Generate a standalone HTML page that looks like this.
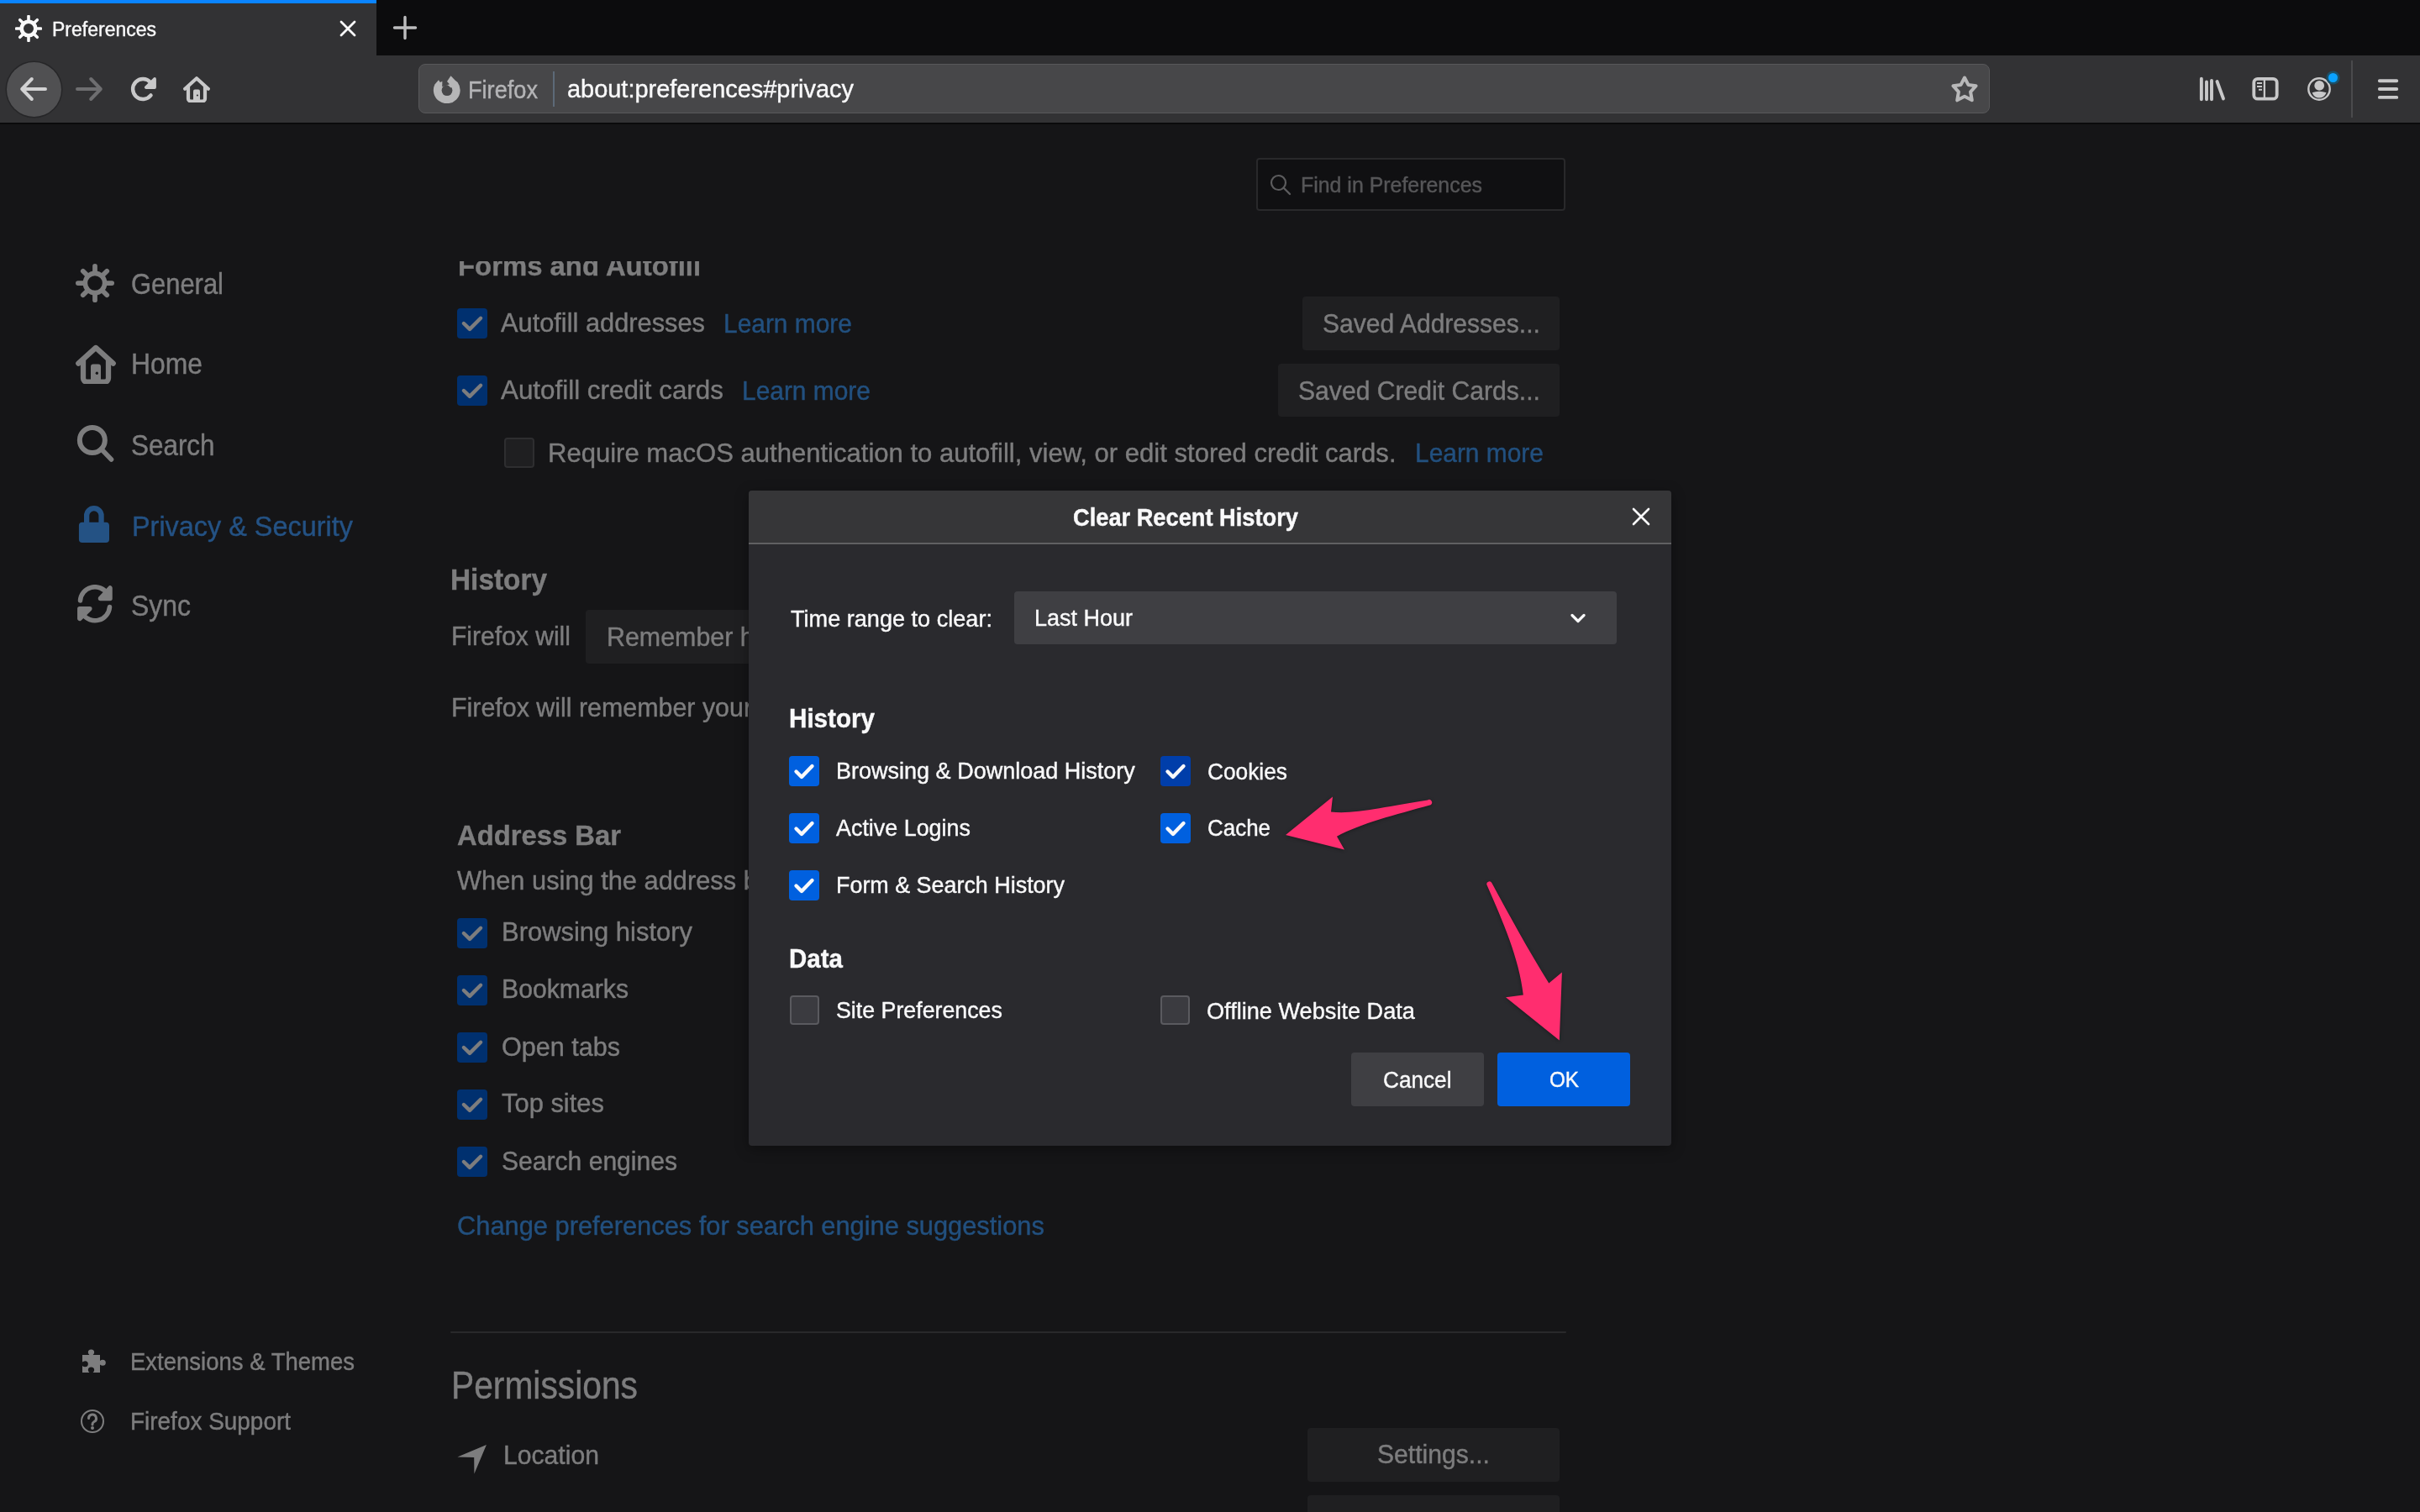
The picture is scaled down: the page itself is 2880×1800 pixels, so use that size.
<!DOCTYPE html>
<html><head><meta charset="utf-8"><style>
html,body{margin:0;padding:0;width:2880px;height:1800px;overflow:hidden;background:#151517}
body{position:relative;font-family:"Liberation Sans",sans-serif}
.b{position:absolute;display:block;box-sizing:content-box}
.t{position:absolute;white-space:nowrap;line-height:1;-webkit-text-stroke:0.4px currentColor;will-change:transform}
</style></head><body>
<div class="b" style="left:0px;top:0px;width:2880px;height:66px;background:#0c0c0d;"></div>
<div class="b" style="left:0px;top:0px;width:448px;height:66px;background:#323234;"></div>
<div class="b" style="left:0px;top:0px;width:448px;height:4px;background:#0a84ff;"></div>
<svg class="b" style="left:18.0px;top:18.0px;" width="32" height="32" viewBox="0 0 32 32"><g stroke="#f9f9fa" fill="none" stroke-linecap="round"><circle cx="16" cy="16" r="8.3" stroke-width="4.6"/><g stroke-width="3.6"><line x1="26.50" y1="16.00" x2="30.60" y2="16.00"/><line x1="23.42" y1="23.42" x2="26.32" y2="26.32"/><line x1="16.00" y1="26.50" x2="16.00" y2="30.60"/><line x1="8.58" y1="23.42" x2="5.68" y2="26.32"/><line x1="5.50" y1="16.00" x2="1.40" y2="16.00"/><line x1="8.58" y1="8.58" x2="5.68" y2="5.68"/><line x1="16.00" y1="5.50" x2="16.00" y2="1.40"/><line x1="23.42" y1="8.58" x2="26.32" y2="5.68"/></g></g></svg>
<div class="t" style="left:62.0px;top:23.5px;font-size:23.00px;color:#f9f9fa;">Preferences</div>
<svg class="b" style="left:402px;top:22px;" width="24" height="24" viewBox="0 0 24 24"><path d="M4 4L20 20M20 4L4 20" stroke="#f9f9fa" stroke-width="2.8" stroke-linecap="round"/></svg>
<svg class="b" style="left:466px;top:17px;" width="32" height="32" viewBox="0 0 32 32"><path d="M16 3.5V28.5M3.5 16H28.5" stroke="#bdbdbe" stroke-width="3.4" stroke-linecap="round"/></svg>
<div class="b" style="left:0px;top:66px;width:2880px;height:80px;background:#323234;"></div>
<div class="b" style="left:0px;top:146px;width:2880px;height:2px;background:#0a0a0b;"></div>
<div class="b" style="left:7.5px;top:73.5px;width:65px;height:65px;border-radius:50%;background:#505052;box-shadow:0 0 0 1.5px #262628"></div>
<svg class="b" style="left:22px;top:90px;" width="36" height="32" viewBox="0 0 36 32"><path d="M4.2 16H32M4.2 16L15.8 4M4.2 16L15.8 28" stroke="#d2d2d3" stroke-width="4" stroke-linecap="round" stroke-linejoin="round" fill="none"/></svg>
<svg class="b" style="left:88px;top:90px;" width="36" height="32" viewBox="0 0 36 32"><path d="M31.8 16H4M31.8 16L20.2 4M31.8 16L20.2 28" stroke="#6e6e70" stroke-width="4" stroke-linecap="round" stroke-linejoin="round" fill="none"/></svg>
<svg class="b" style="left:154px;top:90px;" width="34" height="32" viewBox="0 0 34 32"><path d="M25.56 23.39A12 12 0 1 1 25 7.97" stroke="#c8c8c9" stroke-width="4.4" fill="none" stroke-linecap="round"/><path d="M19.8 14H30V4Z" fill="#c8c8c9" stroke="#c8c8c9" stroke-width="3.8" stroke-linejoin="round" stroke-linecap="round"/></svg>
<svg class="b" style="left:218px;top:90px;" width="32" height="32" viewBox="0 0 32 32"><g fill="none" stroke="#c8c8c9" stroke-width="4.2" stroke-linecap="round" stroke-linejoin="round"><path d="M2.2 15.8L16 3.3L29.8 15.8"/><path d="M6 13V27.5A3 3 0 0 0 9 30.5H23A3 3 0 0 0 26 27.5V13"/></g><path d="M12 18.4A2 2 0 0 1 14 16.4H18A2 2 0 0 1 20 18.4V30.5H12Z" fill="#c8c8c9"/><circle cx="16.9" cy="23.5" r="1.1" fill="#323234"/></svg>
<div class="b" style="left:498px;top:76px;width:1868px;height:57px;border-radius:8px;background:#474749;border:1.5px solid #58585a"></div>
<svg class="b" style="left:515px;top:89px;" width="34" height="34" viewBox="-1 -1 34 34"><path fill="#b6b6b7" d="M1.4 10.5L6 5.3L7.8 7.9L10.4 6.7L13 9.5L16 7.1L20.5 0.2L25.5 5.5L28.6 7.9A15.9 15.9 0 1 1 1.4 10.5Z"/><g fill="#474749"><circle cx="16" cy="17.6" r="6.4"/><path d="M10.4 6.7L16 7.1L19 10.2L15 11.8L10.2 13.2Z"/></g><path fill="#b6b6b7" d="M16.5 10.8L22.8 12.2L20.5 14.5Z"/></svg>
<div class="t" style="left:557.0px;top:93.8px;font-size:27.16px;color:#b4b4b6;transform:scaleY(1.060);transform-origin:0 23.00px;">Firefox</div>
<div class="b" style="left:658px;top:85px;width:2px;height:42px;background:#5d6a78;"></div>
<div class="t" style="left:675.0px;top:92.0px;font-size:28.94px;color:#f9f9fa;">about:preferences#privacy</div>
<svg class="b" style="left:2320px;top:88px;" width="36" height="36" viewBox="0 0 36 36"><path d="M18 4.5L22.4 12.9L31.6 14.2L25.1 21.4L26.8 31.3L18 26.8L9.2 31.3L10.9 21.4L4.4 14.2L13.6 12.9Z" fill="none" stroke="#b8b8b9" stroke-width="4" stroke-linejoin="round"/></svg>
<svg class="b" style="left:2616px;top:90px;" width="34" height="32" viewBox="0 0 34 32"><g stroke="#c8c8c9" stroke-width="3.9" stroke-linecap="round"><path d="M3.85 3.65V28.25M10 7.55V28.25M16 5.95V28.25M22.5 7L30 27.5"/></g></svg>
<svg class="b" style="left:2678px;top:90px;" width="36" height="32" viewBox="0 0 36 32"><rect x="4.3" y="3.9" width="27.4" height="23.8" rx="4.5" fill="none" stroke="#c8c8c9" stroke-width="3.8"/><path d="M16.85 4V28" stroke="#c8c8c9" stroke-width="2.3"/><path d="M8 9H14M8 12.9H14M10 16.8H14" stroke="#c8c8c9" stroke-width="2"/></svg>
<svg class="b" style="left:2744px;top:88px;" width="34" height="34" viewBox="0 0 34 34"><circle cx="16" cy="18" r="12.7" fill="none" stroke="#c8c8c9" stroke-width="2.4"/><circle cx="16.2" cy="13.9" r="5.9" fill="#c8c8c9"/><path d="M7.6 22.2Q16 19.2 24.6 22.2Q22 28.6 16 28.6Q10 28.6 7.6 22.2Z" fill="#c8c8c9"/></svg>
<div class="b" style="left:2770.5px;top:86.5px;width:11px;height:11px;border-radius:50%;background:#0aa2ff;box-shadow:0 0 0 2.6px #1c5068"></div>
<div class="b" style="left:2798px;top:72px;width:2px;height:68px;background:#4a4a4c;"></div>
<svg class="b" style="left:2826px;top:88px;" width="32" height="36" viewBox="0 0 32 36"><path d="M5.85 8.2H26.25M5.85 18H26.25M5.85 27.9H26.25" stroke="#c8c8c9" stroke-width="3.9" stroke-linecap="round"/></svg>
<div class="b" style="left:0px;top:148px;width:2880px;height:1652px;background:#151517;"></div>
<div class="b" style="left:1495px;top:188px;width:364px;height:59px;background:#101012;border:2px solid #29292b;border-radius:4px"></div>
<svg class="b" style="left:1510px;top:206px;" width="28" height="28" viewBox="0 0 28 28"><circle cx="11.5" cy="11.5" r="8.5" fill="none" stroke="#5c5c5e" stroke-width="2.2"/><path d="M17.5 17.5L25 25" stroke="#5c5c5e" stroke-width="2.4" stroke-linecap="round"/></svg>
<div class="t" style="left:1548.0px;top:207.9px;font-size:24.91px;color:#565658;transform:scaleY(1.050);transform-origin:0 21.10px;">Find in Preferences</div>
<svg class="b" style="left:89.8px;top:313.8px;" width="46" height="46" viewBox="0 0 32 32"><g stroke="#7d7d7e" fill="none" stroke-linecap="round"><circle cx="16" cy="16" r="8.1" stroke-width="3.9"/><g stroke-width="4.0"><line x1="26.00" y1="16.00" x2="30.00" y2="16.00"/><line x1="23.07" y1="23.07" x2="25.90" y2="25.90"/><line x1="16.00" y1="26.00" x2="16.00" y2="30.00"/><line x1="8.93" y1="23.07" x2="6.10" y2="25.90"/><line x1="6.00" y1="16.00" x2="2.00" y2="16.00"/><line x1="8.93" y1="8.93" x2="6.10" y2="6.10"/><line x1="16.00" y1="6.00" x2="16.00" y2="2.00"/><line x1="23.07" y1="8.93" x2="25.90" y2="6.10"/></g></g></svg>
<div class="t" style="left:156.0px;top:324.8px;font-size:30.92px;color:#7d7d7e;transform:scaleY(1.152);transform-origin:0 26.19px;">General</div>
<svg class="b" style="left:90px;top:409px;" width="48" height="48" viewBox="0 0 32 32"><g fill="none" stroke="#7d7d7e" stroke-width="4.2" stroke-linecap="round" stroke-linejoin="round"><path d="M2.2 15.8L16 3.3L29.8 15.8"/><path d="M6 13V27.5A3 3 0 0 0 9 30.5H23A3 3 0 0 0 26 27.5V13"/></g><path d="M12 18.4A2 2 0 0 1 14 16.4H18A2 2 0 0 1 20 18.4V30.5H12Z" fill="#7d7d7e"/><circle cx="16.9" cy="23.5" r="1.1" fill="#151517"/></svg>
<div class="t" style="left:156.0px;top:419.0px;font-size:31.86px;color:#7d7d7e;transform:scaleY(1.072);transform-origin:0 26.98px;">Home</div>
<svg class="b" style="left:90px;top:504px;" width="48" height="50" viewBox="0 0 48 50"><circle cx="19.85" cy="20" r="15" fill="none" stroke="#7d7d7e" stroke-width="6"/><path d="M30.5 30.5L42.5 43" stroke="#7d7d7e" stroke-width="5.6" stroke-linecap="round"/></svg>
<div class="t" style="left:156.0px;top:515.9px;font-size:31.41px;color:#7d7d7e;transform:scaleY(1.111);transform-origin:0 26.60px;">Search</div>
<svg class="b" style="left:93px;top:601px;" width="38" height="46" viewBox="0 0 38 46"><path d="M10.15 21V12.85A8.7 8.7 0 0 1 27.55 12.85V21" fill="none" stroke="#245284" stroke-width="6.3"/><rect x="0.9" y="20.8" width="36.1" height="24.2" rx="4" fill="#245284"/></svg>
<div class="t" style="left:157.0px;top:610.5px;font-size:32.42px;color:#245284;transform:scaleY(1.031);transform-origin:0 27.46px;">Privacy &amp; Security</div>
<svg class="b" style="left:90px;top:696px;" width="46" height="46" viewBox="0 0 46 46"><g fill="none" stroke="#7d7d7e" stroke-width="5.5" stroke-linecap="round" stroke-linejoin="round"><path d="M5.5 19A17.5 17.5 0 0 1 37.5 10.5"/><path d="M40.5 26.5A17.5 17.5 0 0 1 8.5 35"/><path d="M41 4V16.4H29.5Z" fill="#7d7d7e"/><path d="M4.8 40.4V28.8H16.8Z" fill="#7d7d7e"/></g></svg>
<div class="t" style="left:156.0px;top:706.9px;font-size:31.94px;color:#7d7d7e;transform:scaleY(1.092);transform-origin:0 27.05px;">Sync</div>
<svg class="b" style="left:96px;top:1604px;" width="32" height="32" viewBox="0 0 32 32"><path transform="translate(2 0) scale(1.05 1) translate(-2 0)" fill="#7d7d7e" d="M2 9H10C9 8 8.5 7 8.5 6A3.5 3.5 0 0 1 15.5 6C15.5 7 15 8 14 9H22V16C23 15.2 24 14.8 25 14.8A3.5 3.5 0 0 1 25 21.8C24 21.8 23 21.3 22 20.5V30H14C15 29 15.5 28 15.5 27A3.5 3.5 0 0 0 8.5 27C8.5 28 9 29 10 30H2V22C3 22.8 4 23.2 5 23.2A3.5 3.5 0 0 0 5 16.2C4 16.2 3 16.8 2 17.5Z"/></svg>
<div class="t" style="left:154.5px;top:1607.7px;font-size:27.50px;color:#7d7d7e;transform:scaleY(1.057);transform-origin:0 23.29px;">Extensions &amp; Themes</div>
<svg class="b" style="left:94px;top:1676px;" width="32" height="32" viewBox="0 0 32 32"><circle cx="16" cy="16" r="13" fill="none" stroke="#7d7d7e" stroke-width="2"/><path d="M11.5 12.5A4.5 4.5 0 1 1 18 16.5C16.8 17.2 16 18 16 19.5V20" fill="none" stroke="#7d7d7e" stroke-width="3" stroke-linecap="round"/><circle cx="16" cy="24" r="2" fill="#7d7d7e"/></svg>
<div class="t" style="left:154.5px;top:1679.3px;font-size:27.94px;color:#7d7d7e;transform:scaleY(1.056);transform-origin:0 23.67px;">Firefox Support</div>
<div class="clip" style="position:absolute;left:0;top:311px;width:2880px;height:1489px;overflow:hidden">
<div class="t" style="left:545.0px;top:-9.8px;font-size:32.86px;color:#7d7d7e;font-weight:bold;">Forms and Autofill</div>
<div class="b" style="left:544px;top:56px;width:36px;height:36px;border-radius:4px;background:#00306f"></div>
<svg class="b" style="left:544px;top:56px;" width="36" height="36" viewBox="0 0 36 36"><path d="M7.9 18L15 24.9L28.1 11.8" fill="none" stroke="#7d7d7e" stroke-width="4.4" stroke-linecap="round" stroke-linejoin="round"/></svg>
<div class="t" style="left:596.0px;top:58.9px;font-size:30.79px;color:#7d7d7e;transform:scaleY(1.039);transform-origin:0 26.08px;">Autofill addresses</div>
<div class="t" style="left:861.0px;top:59.7px;font-size:29.92px;color:#22507f;transform:scaleY(1.069);transform-origin:0 25.34px;">Learn more</div>
<div class="b" style="left:544px;top:136px;width:36px;height:36px;border-radius:4px;background:#00306f"></div>
<svg class="b" style="left:544px;top:136px;" width="36" height="36" viewBox="0 0 36 36"><path d="M7.9 18L15 24.9L28.1 11.8" fill="none" stroke="#7d7d7e" stroke-width="4.4" stroke-linecap="round" stroke-linejoin="round"/></svg>
<div class="t" style="left:596.0px;top:138.4px;font-size:31.37px;color:#7d7d7e;">Autofill credit cards</div>
<div class="t" style="left:883.0px;top:139.7px;font-size:29.92px;color:#22507f;transform:scaleY(1.069);transform-origin:0 25.34px;">Learn more</div>
<div class="b" style="left:600px;top:210px;width:32px;height:32px;border-radius:4px;background:#1f1f21;border:2px solid #2e2e30"></div>
<div class="t" style="left:652.0px;top:212.7px;font-size:31.06px;color:#7d7d7e;transform:scaleY(1.029);transform-origin:0 26.31px;">Require macOS authentication to autofill, view, or edit stored credit cards.</div>
<div class="t" style="left:1684.0px;top:213.7px;font-size:29.92px;color:#22507f;transform:scaleY(1.069);transform-origin:0 25.34px;">Learn more</div>
<div class="b" style="left:1550px;top:42px;width:306px;height:64px;border-radius:4px;background:#1f1f21"></div>
<div class="t" style="left:1574.0px;top:59.5px;font-size:30.06px;color:#7d7d7e;transform:scaleY(1.064);transform-origin:0 25.46px;">Saved Addresses...</div>
<div class="b" style="left:1521px;top:122px;width:335px;height:63px;border-radius:4px;background:#1f1f21"></div>
<div class="t" style="left:1545.0px;top:139.5px;font-size:30.13px;color:#7d7d7e;transform:scaleY(1.061);transform-origin:0 25.52px;">Saved Credit Cards...</div>
<div class="t" style="left:536.4px;top:363.2px;font-size:33.38px;color:#7d7d7e;font-weight:bold;transform:scaleY(1.054);transform-origin:0 28.27px;">History</div>
<div class="t" style="left:536.5px;top:432.1px;font-size:30.07px;color:#7d7d7e;transform:scaleY(1.039);transform-origin:0 25.47px;">Firefox will</div>
<div class="b" style="left:697px;top:415px;width:503px;height:64px;border-radius:4px;background:#1f1f21"></div>
<div class="t" style="left:721.5px;top:431.9px;font-size:30.40px;color:#7d7d7e;transform:scaleY(1.028);transform-origin:0 25.75px;">Remember history</div>
<div class="t" style="left:536.5px;top:516.3px;font-size:30.40px;color:#7d7d7e;transform:scaleY(1.028);transform-origin:0 25.75px;">Firefox will remember your browsing, download, form, and search history.</div>
<div class="t" style="left:544.0px;top:668.2px;font-size:32.79px;color:#7d7d7e;font-weight:bold;">Address Bar</div>
<div class="t" style="left:544.0px;top:723.3px;font-size:30.80px;color:#7d7d7e;transform:scaleY(1.038);transform-origin:0 26.09px;">When using the address bar, suggest</div>
<div class="b" style="left:544px;top:782px;width:36px;height:36px;border-radius:4px;background:#00306f"></div>
<svg class="b" style="left:544px;top:782px;" width="36" height="36" viewBox="0 0 36 36"><path d="M7.9 18L15 24.9L28.1 11.8" fill="none" stroke="#7d7d7e" stroke-width="4.4" stroke-linecap="round" stroke-linejoin="round"/></svg>
<div class="t" style="left:596.5px;top:783.8px;font-size:30.94px;color:#7d7d7e;transform:scaleY(1.033);transform-origin:0 26.21px;">Browsing history</div>
<div class="b" style="left:544px;top:850px;width:36px;height:36px;border-radius:4px;background:#00306f"></div>
<svg class="b" style="left:544px;top:850px;" width="36" height="36" viewBox="0 0 36 36"><path d="M7.9 18L15 24.9L28.1 11.8" fill="none" stroke="#7d7d7e" stroke-width="4.4" stroke-linecap="round" stroke-linejoin="round"/></svg>
<div class="t" style="left:596.5px;top:852.4px;font-size:30.19px;color:#7d7d7e;transform:scaleY(1.059);transform-origin:0 25.57px;">Bookmarks</div>
<div class="b" style="left:544px;top:918px;width:36px;height:36px;border-radius:4px;background:#00306f"></div>
<svg class="b" style="left:544px;top:918px;" width="36" height="36" viewBox="0 0 36 36"><path d="M7.9 18L15 24.9L28.1 11.8" fill="none" stroke="#7d7d7e" stroke-width="4.4" stroke-linecap="round" stroke-linejoin="round"/></svg>
<div class="t" style="left:596.5px;top:920.1px;font-size:30.56px;color:#7d7d7e;transform:scaleY(1.046);transform-origin:0 25.88px;">Open tabs</div>
<div class="b" style="left:544px;top:986px;width:36px;height:36px;border-radius:4px;background:#00306f"></div>
<svg class="b" style="left:544px;top:986px;" width="36" height="36" viewBox="0 0 36 36"><path d="M7.9 18L15 24.9L28.1 11.8" fill="none" stroke="#7d7d7e" stroke-width="4.4" stroke-linecap="round" stroke-linejoin="round"/></svg>
<div class="t" style="left:596.5px;top:987.8px;font-size:30.92px;color:#7d7d7e;transform:scaleY(1.034);transform-origin:0 26.19px;">Top sites</div>
<div class="b" style="left:544px;top:1054px;width:36px;height:36px;border-radius:4px;background:#00306f"></div>
<svg class="b" style="left:544px;top:1054px;" width="36" height="36" viewBox="0 0 36 36"><path d="M7.9 18L15 24.9L28.1 11.8" fill="none" stroke="#7d7d7e" stroke-width="4.4" stroke-linecap="round" stroke-linejoin="round"/></svg>
<div class="t" style="left:596.5px;top:1056.5px;font-size:30.08px;color:#7d7d7e;transform:scaleY(1.063);transform-origin:0 25.47px;">Search engines</div>
<div class="t" style="left:544.0px;top:1133.5px;font-size:30.82px;color:#22507f;transform:scaleY(1.038);transform-origin:0 26.10px;">Change preferences for search engine suggestions</div>
<div class="b" style="left:536px;top:1274px;width:1328px;height:2px;border-radius:4px;background:#29292b"></div>
<div class="t" style="left:536.7px;top:1319.5px;font-size:40.76px;color:#7d7d7e;transform:scaleY(1.141);transform-origin:0 34.53px;">Permissions</div>
<svg class="b" style="left:544px;top:1408px;" width="36" height="37" viewBox="0 0 36 37"><path d="M34.9 1L0.4 15.6L20.2 16.1L20.4 35.6Z" fill="#7d7d7e"/></svg>
<div class="t" style="left:599.0px;top:1406.8px;font-size:30.15px;color:#7d7d7e;transform:scaleY(1.061);transform-origin:0 25.54px;">Location</div>
<div class="b" style="left:1556px;top:1389px;width:300px;height:64px;border-radius:4px;background:#1f1f21"></div>
<div class="t" style="left:1639.0px;top:1406.1px;font-size:30.13px;color:#7d7d7e;transform:scaleY(1.061);transform-origin:0 25.52px;">Settings...</div>
<div class="b" style="left:1556px;top:1469px;width:300px;height:64px;border-radius:4px;background:#1f1f21"></div>
</div>
<div class="b" style="left:891px;top:584px;width:1098px;height:780px;background:#2a2a2e;border-radius:4px;overflow:hidden;box-shadow:0 4px 16px rgba(0,0,0,0.35)">
<div class="b" style="left:0;top:0;width:1098px;height:62px;background:#363638"></div>
<div class="b" style="left:0;top:62px;width:1098px;height:2px;background:#606062"></div>
</div>
<div class="t" style="left:1276.7px;top:602.9px;font-size:27.24px;color:#f9f9fa;font-weight:bold;transform:scaleY(1.067);transform-origin:0 23.08px;">Clear Recent History</div>
<svg class="b" style="left:1941px;top:604px;" width="24" height="22" viewBox="0 0 24 22"><path d="M3 2L21 20M21 2L3 20" stroke="#f9f9fa" stroke-width="2.6" stroke-linecap="round"/></svg>
<div class="t" style="left:941.3px;top:723.0px;font-size:27.10px;color:#f9f9fa;">Time range to clear:</div>
<div class="b" style="left:1207px;top:704px;width:717px;height:63px;border-radius:4px;background:#3f3f43"></div>
<div class="t" style="left:1230.7px;top:723.1px;font-size:26.99px;color:#f9f9fa;transform:scaleY(1.023);transform-origin:0 22.86px;">Last Hour</div>
<svg class="b" style="left:1868px;top:729px;" width="20" height="15" viewBox="0 0 20 15"><path d="M3 3.5L10 10.5L17 3.5" fill="none" stroke="#f9f9fa" stroke-width="3.2" stroke-linecap="round" stroke-linejoin="round"/></svg>
<div class="t" style="left:939.4px;top:841.2px;font-size:29.61px;color:#f9f9fa;font-weight:bold;transform:scaleY(1.031);transform-origin:0 25.08px;">History</div>
<div class="b" style="left:939px;top:900px;width:36px;height:36px;border-radius:4px;background:#0060df"></div>
<svg class="b" style="left:939px;top:900px;" width="36" height="36" viewBox="0 0 36 36"><path d="M8.5 18.5L15 25L27.5 12" fill="none" stroke="#f9f9fa" stroke-width="4.4" stroke-linecap="round" stroke-linejoin="round"/></svg>
<div class="t" style="left:995.4px;top:905.1px;font-size:27.03px;color:#f9f9fa;transform:scaleY(1.022);transform-origin:0 22.89px;">Browsing &amp; Download History</div>
<div class="b" style="left:939px;top:968px;width:36px;height:36px;border-radius:4px;background:#0060df"></div>
<svg class="b" style="left:939px;top:968px;" width="36" height="36" viewBox="0 0 36 36"><path d="M8.5 18.5L15 25L27.5 12" fill="none" stroke="#f9f9fa" stroke-width="4.4" stroke-linecap="round" stroke-linejoin="round"/></svg>
<div class="t" style="left:995.4px;top:972.9px;font-size:26.90px;color:#f9f9fa;transform:scaleY(1.027);transform-origin:0 22.78px;">Active Logins</div>
<div class="b" style="left:939px;top:1036px;width:36px;height:36px;border-radius:4px;background:#0060df"></div>
<svg class="b" style="left:939px;top:1036px;" width="36" height="36" viewBox="0 0 36 36"><path d="M8.5 18.5L15 25L27.5 12" fill="none" stroke="#f9f9fa" stroke-width="4.4" stroke-linecap="round" stroke-linejoin="round"/></svg>
<div class="t" style="left:995.4px;top:1041.2px;font-size:26.90px;color:#f9f9fa;transform:scaleY(1.027);transform-origin:0 22.78px;">Form &amp; Search History</div>
<div class="b" style="left:1381px;top:900px;width:36px;height:36px;border-radius:4px;background:#003eaa"></div>
<svg class="b" style="left:1381px;top:900px;" width="36" height="36" viewBox="0 0 36 36"><path d="M8.5 18.5L15 25L27.5 12" fill="none" stroke="#f9f9fa" stroke-width="4.4" stroke-linecap="round" stroke-linejoin="round"/></svg>
<div class="t" style="left:1436.7px;top:905.7px;font-size:26.29px;color:#f9f9fa;transform:scaleY(1.050);transform-origin:0 22.27px;">Cookies</div>
<div class="b" style="left:1381px;top:968px;width:36px;height:36px;border-radius:4px;background:#0060df"></div>
<svg class="b" style="left:1381px;top:968px;" width="36" height="36" viewBox="0 0 36 36"><path d="M8.5 18.5L15 25L27.5 12" fill="none" stroke="#f9f9fa" stroke-width="4.4" stroke-linecap="round" stroke-linejoin="round"/></svg>
<div class="t" style="left:1436.7px;top:973.7px;font-size:25.94px;color:#f9f9fa;transform:scaleY(1.065);transform-origin:0 21.97px;">Cache</div>
<div class="t" style="left:939.0px;top:1126.6px;font-size:29.44px;color:#f9f9fa;font-weight:bold;transform:scaleY(1.037);transform-origin:0 24.93px;">Data</div>
<div class="b" style="left:939.5px;top:1185px;width:31px;height:31px;border-radius:4px;background:#3b3b40;border:2px solid #5a5a5f"></div>
<div class="t" style="left:994.7px;top:1190.3px;font-size:26.78px;color:#f9f9fa;transform:scaleY(1.031);transform-origin:0 22.68px;">Site Preferences</div>
<div class="b" style="left:1381px;top:1185px;width:31px;height:31px;border-radius:4px;background:#3b3b40;border:2px solid #5a5a5f"></div>
<div class="t" style="left:1436.4px;top:1190.0px;font-size:27.15px;color:#f9f9fa;">Offline Website Data</div>
<div class="b" style="left:1608px;top:1253px;width:158px;height:64px;border-radius:4px;background:#3f3f43"></div>
<div class="t" style="left:1646.0px;top:1272.5px;font-size:26.18px;color:#f9f9fa;transform:scaleY(1.055);transform-origin:0 22.17px;">Cancel</div>
<div class="b" style="left:1782px;top:1253px;width:158px;height:64px;border-radius:4px;background:#0060df"></div>
<div class="t" style="left:1844.0px;top:1274.3px;font-size:24.22px;color:#f9f9fa;transform:scaleY(1.092);transform-origin:0 20.52px;">OK</div>
<svg class="b" style="left:0px;top:0px;" width="2880" height="1800" viewBox="0 0 2880 1800"><g fill="#ff2d6f" style="filter:drop-shadow(0 1px 2px rgba(0,0,0,0.35))"><path d="M1530 994L1586 948.6L1584 966.4C1610 970 1650 960 1699 952.5A2.9 2.9 0 0 1 1702.5 958.2C1660 970 1620 980 1591 995.7L1600 1011.4Z"/><path d="M1775.3 1051.1C1796.9 1091.1 1818.5 1130.6 1843.3 1170.6L1858.9 1157.4L1855.8 1238.6L1792 1187.2L1812.8 1184.4C1807.8 1139.4 1787.1 1093.9 1769.7 1053.9A3 3 0 0 1 1775.3 1051.1Z"/></g></svg>
</body></html>
